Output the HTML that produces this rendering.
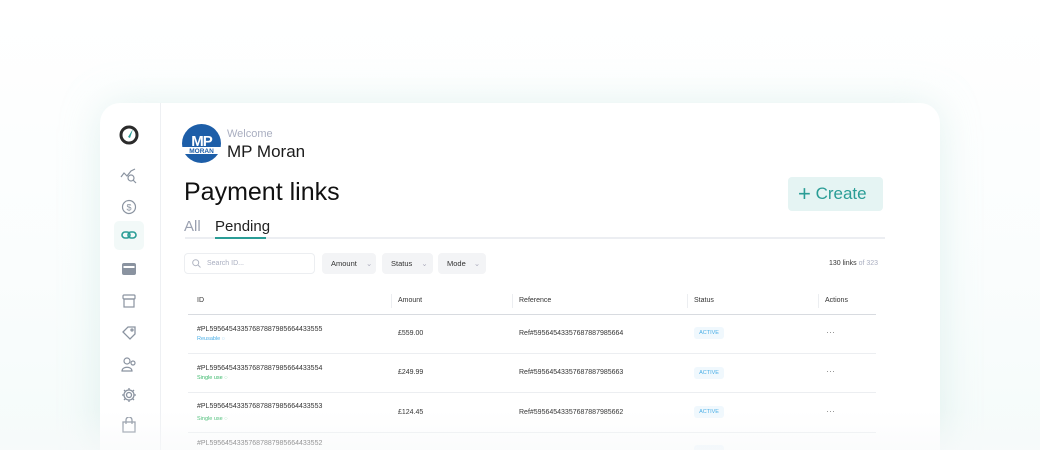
<!DOCTYPE html>
<html style="width:1040px;height:450px;overflow:hidden"><head><style>
*{margin:0;padding:0;box-sizing:border-box}
body{width:1040px;height:450px;overflow:hidden;font-family:"Liberation Sans",sans-serif;background:linear-gradient(180deg,#fff 0%,#fafdfd 60%,#f5fbfa 100%);position:relative;color:#222}
.card{position:absolute;left:100px;top:103px;width:840px;height:347px;background:#fff;border-radius:20px 20px 0 0;box-shadow:0 0 40px rgba(180,220,215,.35)}
.side{position:absolute;left:0;top:0;width:61px;height:100%;border-right:1px solid #eef0f3}
.abs{position:absolute}
.fb{position:absolute;top:253px;height:21px;background:#f3f4f6;border-radius:4px;font-size:7.5px;color:#333;line-height:21px;padding-left:9px}
.th{position:absolute;top:297px;font-size:7px;color:#333}
.cell{position:absolute;font-size:7px;color:#333}
.hl{position:absolute;left:188px;width:688px;height:1px;background:#eceef1}
.badge{position:absolute;left:694px;width:30px;height:12px;border-radius:3px;background:#f0f8fd;color:#4aaee6;font-size:5.5px;text-align:center;line-height:12px}
.dots{position:absolute;left:826px;font-size:9px;color:#888}
.vd{position:absolute;top:294px;width:1px;height:14px;background:#eceef1}
.fade{position:absolute;left:0;top:410px;width:1040px;height:40px;background:linear-gradient(180deg,rgba(255,255,255,0),rgba(248,249,250,.6))}
</style></head><body>
<div class="card">
 <div class="side"></div>
</div>
<svg class="abs" style="left:118px;top:124px" width="22" height="22" viewBox="0 0 22 22"><circle cx="11" cy="11" r="8" fill="none" stroke="#2b2b2b" stroke-width="3"/><path d="M15 5 L10 13 L12 14 Z" fill="#2a9d96"/></svg>
<svg class="abs" style="left:120px;top:168px" width="18" height="16" viewBox="0 0 18 16" fill="none" stroke="#8a93a0" stroke-width="1.2"><path d="M1 9 L4 5 L7 8 L11 3 L15 1"/><circle cx="11" cy="10" r="3"/><path d="M13 12 L16 15"/></svg>
<svg class="abs" style="left:121px;top:199px" width="16" height="16" viewBox="0 0 16 16" fill="none" stroke="#8a93a0" stroke-width="1.2"><circle cx="8" cy="8" r="6.5"/><text x="8" y="11.5" font-size="9" text-anchor="middle" fill="#8a93a0" stroke="none" font-family="Liberation Sans">$</text></svg>
<div class="abs" style="left:114px;top:221px;width:30px;height:29px;background:#f2f9f8;border-radius:5px"></div>
<svg class="abs" style="left:121px;top:230px" width="16" height="10" viewBox="0 0 16 10" fill="none" stroke="#2a9d96" stroke-width="1.6"><rect x="1" y="2" width="8" height="6" rx="3"/><rect x="7" y="2" width="8" height="6" rx="3"/></svg>
<svg class="abs" style="left:122px;top:263px" width="14" height="12" viewBox="0 0 14 12"><rect x="0" y="0" width="14" height="12" rx="2" fill="#8a93a0"/><rect x="1.5" y="3" width="11" height="2" fill="#fff"/></svg>
<svg class="abs" style="left:122px;top:294px" width="14" height="14" viewBox="0 0 14 14" fill="none" stroke="#8a93a0" stroke-width="1.2"><rect x="1" y="1" width="12" height="4" rx="1"/><rect x="2" y="5" width="10" height="8"/></svg>
<svg class="abs" style="left:121px;top:325px" width="16" height="16" viewBox="0 0 16 16" fill="none" stroke="#8a93a0" stroke-width="1.3"><path d="M2 7 L7 2 L14 2 L14 9 L9 14 Z"/><circle cx="11" cy="5" r="1"/></svg>
<svg class="abs" style="left:121px;top:357px" width="16" height="15" viewBox="0 0 16 15" fill="none" stroke="#8a93a0" stroke-width="1.2"><circle cx="6" cy="4" r="3"/><path d="M1 14 C1 9 11 9 11 14 Z"/><circle cx="12" cy="6" r="2"/></svg>
<svg class="abs" style="left:121px;top:387px" width="16" height="16" viewBox="0 0 16 16" fill="none" stroke="#8a93a0" stroke-width="1.3"><circle cx="8" cy="8" r="2.5"/><path d="M8 1 L8 3 M8 13 L8 15 M1 8 L3 8 M13 8 L15 8 M3 3 L4.5 4.5 M11.5 11.5 L13 13 M3 13 L4.5 11.5 M11.5 4.5 L13 3"/><circle cx="8" cy="8" r="5"/></svg>
<svg class="abs" style="left:122px;top:417px" width="14" height="16" viewBox="0 0 14 16" fill="none" stroke="#8a93a0" stroke-width="1.3"><rect x="1" y="5" width="12" height="10"/><path d="M4 7 V3 A3 3 0 0 1 10 3 V7"/></svg>
<svg class="abs" style="left:182px;top:124px" width="39" height="39" viewBox="0 0 39 39"><circle cx="19.5" cy="19.5" r="19.5" fill="#1d5ea8"/><text x="19.5" y="22" font-size="15" font-weight="bold" fill="#fff" text-anchor="middle" font-family="Liberation Sans" letter-spacing="-1">MP</text><rect x="0" y="23" width="39" height="7" fill="#fff"/><text x="19.5" y="29.2" font-size="6.5" font-weight="bold" fill="#1d5ea8" text-anchor="middle" font-family="Liberation Sans">MORAN</text></svg>
<div class="abs" style="left:227px;top:128px;font-size:11px;color:#a9aec0">Welcome</div>
<div class="abs" style="left:227px;top:142px;font-size:17px;color:#1a1a1a">MP Moran</div>
<div class="abs" style="left:184px;top:178px;font-size:25px;color:#111">Payment links</div>
<div class="abs" style="left:788px;top:177px;width:95px;height:34px;background:#e5f4f3;border-radius:4px;color:#2a9d96;font-size:17px;line-height:34px;padding-left:10px"><span style="font-size:22px;font-weight:300;vertical-align:-2px">+</span> Create</div>
<div class="abs" style="left:184px;top:218px;font-size:15px;color:#9aa0b0">All</div>
<div class="abs" style="left:215px;top:218px;font-size:15px;color:#222">Pending</div>
<div class="abs" style="left:185px;top:237px;width:700px;height:2px;background:#eceef2"></div>
<div class="abs" style="left:215px;top:237px;width:51px;height:2px;background:#2a9d96"></div>
<div class="abs" style="left:184px;top:253px;width:131px;height:21px;border:1px solid #eceef1;border-radius:4px;font-size:7px;color:#a9aec0;line-height:19px;padding-left:22px">Search ID...</div>
<svg class="abs" style="left:192px;top:259px" width="9" height="9" viewBox="0 0 9 9" fill="none" stroke="#b0b5c2" stroke-width="1"><circle cx="3.7" cy="3.7" r="3"/><path d="M6 6 L8.5 8.5"/></svg>
<div class="fb" style="left:322px;width:54px">Amount <span style="color:#aab;margin-left:7px">⌄</span></div>
<div class="fb" style="left:382px;width:51px">Status <span style="color:#aab;margin-left:7px">⌄</span></div>
<div class="fb" style="left:438px;width:48px">Mode <span style="color:#aab;margin-left:6px">⌄</span></div>
<div class="abs" style="left:829px;top:260px;font-size:7px;color:#333">130 links <span style="color:#a9aec0">of 323</span></div>
<div class="th" style="left:197px">ID</div>
<div class="th" style="left:398px">Amount</div>
<div class="th" style="left:519px">Reference</div>
<div class="th" style="left:694px">Status</div>
<div class="th" style="left:825px">Actions</div>
<div class="vd" style="left:391px"></div><div class="vd" style="left:512px"></div><div class="vd" style="left:687px"></div><div class="vd" style="left:818px"></div>
<div class="hl" style="top:314px;background:#d8dbe0"></div>
<div class="hl" style="top:353px"></div><div class="hl" style="top:392px"></div><div class="hl" style="top:432px"></div>

<div class="cell" style="left:197px;top:326px">#PL59564543357687887985664433555</div>
<div class="cell" style="left:197px;top:336px;font-size:5.5px;color:#4aaee6">Reusable ◌</div>
<div class="cell" style="left:398px;top:330px">£559.00</div>
<div class="cell" style="left:519px;top:330px">Ref#59564543357687887985664</div>
<div class="badge" style="top:327px">ACTIVE</div><div class="dots" style="top:327px">···</div>

<div class="cell" style="left:197px;top:365px">#PL59564543357687887985664433554</div>
<div class="cell" style="left:197px;top:375px;font-size:5.5px;color:#39b86a">Single use ◌</div>
<div class="cell" style="left:398px;top:369px">£249.99</div>
<div class="cell" style="left:519px;top:369px">Ref#59564543357687887985663</div>
<div class="badge" style="top:367px">ACTIVE</div><div class="dots" style="top:366px">···</div>

<div class="cell" style="left:197px;top:403px">#PL59564543357687887985664433553</div>
<div class="cell" style="left:197px;top:416px;font-size:5.5px;color:#39b86a">Single use ◌</div>
<div class="cell" style="left:398px;top:409px">£124.45</div>
<div class="cell" style="left:519px;top:409px">Ref#59564543357687887985662</div>
<div class="badge" style="top:406px">ACTIVE</div><div class="dots" style="top:406px">···</div>

<div class="cell" style="left:197px;top:440px">#PL59564543357687887985664433552</div>
<div class="abs" style="left:694px;top:445px;width:30px;height:5px;border-radius:3px 3px 0 0;background:#f0f8fd"></div>
<div class="fade"></div>
</body></html>
